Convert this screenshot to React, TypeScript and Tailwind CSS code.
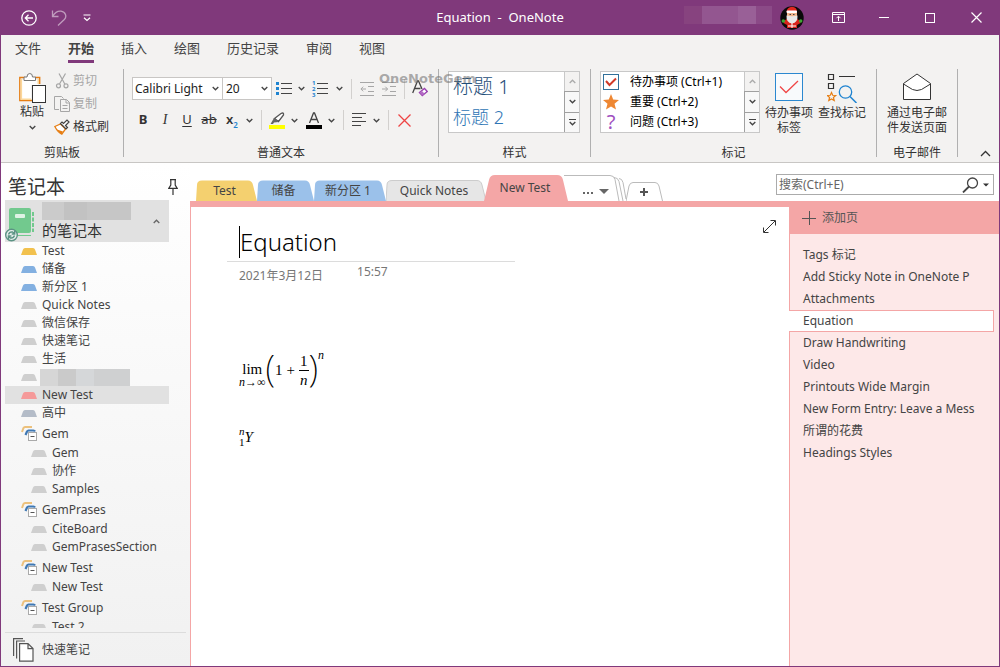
import type { ReactNode } from "react";

const SANS = "font-['Noto_Sans','Noto_Sans_CJK_SC',sans-serif]";

const menuTabs = ["文件", "开始", "插入", "绘图", "历史记录", "审阅", "视图"];

const sections = [
  { name: "Test", color: "#f2c14e" },
  { name: "储备", color: "#83b0e1" },
  { name: "新分区 1", color: "#83b0e1" },
  { name: "Quick Notes", color: "#cfcfcf" },
  { name: "微信保存", color: "#cfcfcf" },
  { name: "快速笔记", color: "#cfcfcf" },
  { name: "生活", color: "#cfcfcf" },
  { name: "", color: "#cfcfcf" },
  { name: "New Test", color: "#f59a9a", active: true },
  { name: "高中", color: "#b4bcc8" },
];

const groups = [
  { name: "Gem", children: ["Gem", "协作", "Samples"] },
  { name: "GemPrases", children: ["CiteBoard", "GemPrasesSection"] },
  { name: "New Test", children: ["New Test"] },
  { name: "Test Group", children: ["Test 2"] },
];

const sectionTabs = [
  { name: "Test", width: 61, fill: "#f4d06f" },
  { name: "储备", width: 57, fill: "#9bc1ea" },
  { name: "新分区 1", width: 72, fill: "#9bc1ea" },
  { name: "Quick Notes", width: 100, fill: "#e6e6e6", stroke: "#cccccc" },
];

const pages = [
  "Tags 标记",
  "Add Sticky Note in OneNote P",
  "Attachments",
  "Equation",
  "Draw Handwriting",
  "Video",
  "Printouts Wide Margin",
  "New Form Entry: Leave a Mess",
  "所谓的花费",
  "Headings Styles",
];

function Chevron({ up = false, color = "#444" }: { up?: boolean; color?: string }) {
  return (
    <svg width="7" height="5" viewBox="0 0 7 5" fill="none" stroke={color} strokeWidth="1.3">
      <path d={up ? "M.7 4 3.5 1.2 6.3 4" : "M.7 1 3.5 3.8 6.3 1"} />
    </svg>
  );
}

function DropButton({ label }: { label: string }) {
  return (
    <button aria-label={label} className="flex h-5 w-2.5 items-center justify-center">
      <Chevron />
    </button>
  );
}

function Tool({ label, className = "w-4", children }: { label: string; className?: string; children: ReactNode }) {
  return (
    <button aria-label={label} className={`flex h-5 items-center justify-center ${className}`}>
      {children}
    </button>
  );
}

function Sep() {
  return <span className="mx-[7px] h-5 w-px bg-[#d2d0ce]" />;
}

function RibbonGroup({ title, className, children }: { title: string; className: string; children: ReactNode }) {
  return (
    <section className={`flex h-[88px] shrink-0 flex-col border-r border-[#b0b0b0] ${className}`}>
      <div className="min-h-0 flex-1">{children}</div>
      <h2 className="h-2 text-center text-xs leading-2 text-[#333]">{title}</h2>
    </section>
  );
}

function GalleryScroll() {
  return (
    <div className="flex w-[15px] flex-col">
      <button aria-label="向上" className="flex flex-1 items-center justify-center border-l border-[#c8c8c8] bg-[#f3f2f1]">
        <Chevron up color="#aaa" />
      </button>
      <button aria-label="向下" className="flex flex-1 items-center justify-center border border-r-0 border-[#a0a0a0] bg-[#f8f8f8]">
        <Chevron />
      </button>
      <button aria-label="更多" className="flex flex-1 flex-col items-center justify-center gap-px border-l border-[#a0a0a0] bg-[#f8f8f8]">
        <span className="h-px w-[7px] bg-[#444]" />
        <Chevron />
      </button>
    </div>
  );
}

function Santa() {
  return (
    <svg width="24" height="24" viewBox="0 0 24 24">
      <circle cx="12" cy="12" r="11.7" fill="#0a0a0a" />
      <path d="M4 15 8 12h8l4 3 .5 2-3.500 2v3H7v-3l-3.500-2z" fill="#d8241c" />
      <path d="M6.500 6Q7 1 12 .7q5 .3 5 5.300z" fill="#e0281f" />
      <rect x="7" y="6" width="10" height="5" fill="#f0b48c" />
      <rect x="6.500" y="4.500" width="10.500" height="2.500" rx="1" fill="#fff" />
      <path d="M6.500 9.500q5.500 1.500 11 0 .5 7-5.500 8-6-1-5.500-8z" fill="#e8e8e8" />
      <path d="M9.500 8.500h1.500M13 8.500h1.500" stroke="#444" />
      <path d="M11.500 17h1v5h-1zM8 19.500h8v1H8z" fill="#fff" />
      <circle cx="3.300" cy="15" r="1.800" fill="#3fa535" />
      <circle cx="20.700" cy="15" r="1.800" fill="#3fa535" />
    </svg>
  );
}

function TitleBar() {
  return (
    <header className="grid h-[35px] shrink-0 grid-cols-[1fr_auto_1fr] items-center bg-[#80397b] text-white">
      <div className="flex items-center pl-5">
        <button aria-label="返回">
          <svg width="16" height="16" viewBox="0 0 16 16" fill="none" stroke="currentColor" strokeWidth="1.3">
            <circle cx="8" cy="8" r="7.2" />
            <path d="M12 8H4.5M7.5 4.8 4.3 8l3.2 3.2" />
          </svg>
        </button>
        <button aria-label="撤消" className="ml-[14px] text-[#bf9cbd]">
          <svg width="16" height="18" viewBox="0 0 16 18" fill="none" stroke="currentColor" strokeWidth="1.3">
            <path d="M1.500 1.500v6h6M1.700 7.200C4 3.500 7 1.800 10 2.200c4.600.6 6.200 5.300 3.300 8.300L7 16.500" />
          </svg>
        </button>
        <button aria-label="自定义快速访问工具栏" className="ml-4">
          <svg width="8" height="8" viewBox="0 0 8 8" fill="none" stroke="currentColor" strokeWidth="1.2">
            <path d="M.5 1h7M1 3.800l3 2.700 3-2.700" />
          </svg>
        </button>
      </div>
      <h1 className="text-[13px] whitespace-pre">Equation  -  OneNote</h1>
      <div className="flex items-center justify-end">
        <div className="mr-2 mb-1.5 flex h-[18px]">
          <span className="w-[18px] bg-[#87437f]" />
          <span className="w-9 bg-[#935690]" />
          <span className="w-[18px] bg-[#996097]" />
          <span className="w-4 bg-[#8b4a87]" />
        </div>
        <Santa />
        <button aria-label="功能区显示选项" className="ml-[11px] flex w-[46px] justify-center">
          <svg width="13" height="11" viewBox="0 0 13 11" fill="none" stroke="currentColor">
            <path d="M.5.500h12v10H.5zM.5 2.500h12M6.500 9V4.500M4.500 6.200l2-2 2 2" />
          </svg>
        </button>
        <button aria-label="最小化" className="flex w-[46px] justify-center">
          <span className="h-px w-[10px] bg-white" />
        </button>
        <button aria-label="最大化" className="flex w-[46px] justify-center">
          <span className="size-[10px] border border-white" />
        </button>
        <button aria-label="关闭" className="flex w-[46px] justify-center">
          <svg width="11" height="11" viewBox="0 0 11 11" stroke="currentColor" strokeWidth="1.2">
            <path d="m.5.500 10 10M10.500.5l-10 10" />
          </svg>
        </button>
      </div>
    </header>
  );
}

function ClipboardGroup() {
  return (
    <RibbonGroup title="剪贴板" className="w-[123px]">
      <div className="flex pl-[17px]">
        <button className="flex w-7 flex-col items-center pt-[3px] text-xs leading-[14px] text-[#333]">
          <svg width="28" height="31" viewBox="0 0 28 31" fill="none" className="shrink-0">
            <path d="M7 5.500H1.800v23H14M17 5.500h4.700V12" stroke="#e67e14" strokeWidth="1.400" />
            <path d="M4 8h16v5h-7v14H4z" fill="#fff" />
            <path d="M3.300 7v20.300H13M20.300 7v5" stroke="#fbd79a" strokeWidth="1.600" />
            <path d="M6 8.500V5h3q0-3.500 2.800-3.500T14.500 5h3v3.500z" fill="#fff" stroke="#777" />
            <rect x="14.500" y="13.500" width="13" height="17" fill="#fff" stroke="#333" />
          </svg>
          <span className="pt-0.5">粘贴</span>
          <span className="pt-1.5"><Chevron /></span>
        </button>
        <div className="flex flex-col pl-2 text-xs">
          <button className="flex h-[23px] items-center gap-[3px] text-[#a6a6a6]">
            <svg width="16" height="16" viewBox="0 0 16 16" fill="none" stroke="currentColor" strokeWidth="1.200">
              <path d="M5 .5 10.800 11M11.500.5 5.500 11" />
              <circle cx="4.500" cy="12.800" r="2" />
              <circle cx="12" cy="12.800" r="2" />
            </svg>
            剪切
          </button>
          <button className="flex h-[23px] items-center gap-[3px] text-[#a6a6a6]">
            <svg width="16" height="16" viewBox="0 0 16 16" fill="none" stroke="currentColor">
              <path d="M5 13.500H.5V.5h7l2 2M6.500 3.500h6l3 3v9h-9zM12 3.500v3.500h3.500M8.500 9.500h5M8.500 12.500h5" />
            </svg>
            复制
          </button>
          <button className="flex h-[23px] items-center gap-[3px] text-[#333]">
            <svg width="16" height="16" viewBox="0 0 16 16" fill="none">
              <path d="M.8 7.500 6.500 5l5 5-3.700 5.200Q4 13.500.8 7.500z" fill="#fff" stroke="#e67e14" strokeWidth="1.300" />
              <path d="m3 10.500 6 2-1.500 2.500Q4.500 13.500 3 10.500z" fill="#e67e14" />
              <path d="m6.500 4.500 5.500 5.500 1.500-1.500-2-2L15 3l-2-2-3.500 3.500L8 3z" fill="#fff" stroke="#444" strokeWidth="1.200" />
            </svg>
            格式刷
          </button>
        </div>
      </div>
    </RibbonGroup>
  );
}

function TextGroup() {
  return (
    <RibbonGroup title="普通文本" className="w-[315px]">
      <div className="flex items-center pt-2 pl-2">
        <label className="relative flex h-[23px] w-[91px] items-center border border-[#c8c6c4] bg-white">
          <select aria-label="字体" className="w-full appearance-none pl-0.5 text-xs text-[#222]">
            <option>Calibri Light</option>
          </select>
          <span className="pointer-events-none absolute right-[3px]"><Chevron /></span>
        </label>
        <label className="relative flex h-[23px] w-[49px] items-center border border-l-0 border-[#c8c6c4] bg-white">
          <select aria-label="字号" className="w-full appearance-none pl-[3px] text-xs text-[#222]">
            <option>20</option>
          </select>
          <span className="pointer-events-none absolute right-[3px]"><Chevron /></span>
        </label>
        <Tool label="项目符号" className="w-6">
          <svg width="16" height="16" viewBox="0 0 16 16">
            <path d="M0 1h3v3H0zM0 6h3v3H0zM0 11h3v3H0z" fill="#1e83d0" />
            <path d="M5 2.500h11M5 7.500h11M5 12.500h11" stroke="#444" />
          </svg>
        </Tool>
        <DropButton label="项目符号选项" />
        <Tool label="编号" className="w-7">
          <svg width="16" height="20" viewBox="0 0 16 20">
            <g fill="#1e83d0" className="text-[6px] font-bold">
              <text x="0" y="6">1</text>
              <text x="0" y="12">2</text>
              <text x="0" y="18">3</text>
            </g>
            <path d="M5 4.500h11M5 9.500h11M5 14.500h11" stroke="#444" />
          </svg>
        </Tool>
        <DropButton label="编号选项" />
        <Sep />
        <Tool label="减少缩进">
          <svg width="15" height="14" viewBox="0 0 15 14" fill="none" stroke="#a6a6a6">
            <path d="M0 .500h14M8 4.500h6M8 9.500h6M0 13.500h14M6 7H1M3.200 4.700.9 7l2.300 2.300" />
          </svg>
        </Tool>
        <Tool label="增加缩进" className="ml-1.5 w-4">
          <svg width="15" height="14" viewBox="0 0 15 14" fill="none" stroke="#a6a6a6">
            <path d="M0 .500h14M8 4.500h6M8 9.500h6M0 13.500h14M0 7h5.500M3.300 4.700 5.600 7 3.300 9.300" />
          </svg>
        </Tool>
        <Sep />
        <Tool label="清除格式">
          <svg width="16" height="17" viewBox="0 0 16 17" fill="none">
            <path d="M.7 13 5.500 1h1L10 9M2.500 8.500h6" stroke="#444" strokeWidth="1.300" />
            <path d="m7.500 12.500 5-4 2.800 3-5 4z" fill="#fff" stroke="#9a3fb0" strokeWidth="1.400" />
            <path d="m7.500 12.500 2.300-1.800 2.800 3-2.300 1.800z" fill="#b36cc5" />
          </svg>
        </Tool>
      </div>
      <div className="flex items-center pt-2.5 pl-2 text-[13px] text-[#333]">
        <Tool label="加粗" className="w-[22px] font-bold">B</Tool>
        <Tool label="倾斜" className="w-[22px] font-['Liberation_Serif',serif] text-sm italic">I</Tool>
        <Tool label="下划线" className="w-[22px] underline underline-offset-2">U</Tool>
        <Tool label="删除线" className="w-[22px] line-through">ab</Tool>
        <Tool label="下标" className="w-6 font-semibold">
          x<span className="self-end text-[8px] leading-[10px] text-[#1e83d0]">2</span>
        </Tool>
        <DropButton label="下标选项" />
        <Sep />
        <Tool label="突出显示">
          <svg width="16" height="17" viewBox="0 0 16 17">
            <path d="M0 13h16v4H0z" fill="#ffff00" />
            <path d="m5.500 6.500 6.500-5q3-1.500 2.500 1.500L9.500 9.500z" fill="#fff" stroke="#555" strokeWidth="1.300" />
            <path d="m1.500 12 3.500-6 4.500 4-4.500.5-1 1.500z" fill="#666" />
          </svg>
        </Tool>
        <span className="pl-1"><DropButton label="突出显示颜色" /></span>
        <Tool label="字体颜色" className="ml-[7px] w-4">
          <svg width="16" height="17" viewBox="0 0 16 17" fill="none">
            <path d="M3.500 11 7.500 1h1l4 10M5 7.500h6" stroke="#444" strokeWidth="1.300" />
            <path d="M0 13h16v4H0z" fill="#000" />
          </svg>
        </Tool>
        <span className="pl-1"><DropButton label="字体颜色选项" /></span>
        <Sep />
        <Tool label="段落对齐">
          <svg width="14" height="14" viewBox="0 0 14 14" stroke="#444">
            <path d="M0 .500h14M0 4.500h10M0 8.500h14M0 12.500h9" />
          </svg>
        </Tool>
        <span className="pl-1"><DropButton label="对齐选项" /></span>
        <Sep />
        <Tool label="删除">
          <svg width="13" height="13" viewBox="0 0 13 13" stroke="#ee4444" strokeWidth="1.300">
            <path d="m.5.500 12 12M12.500.5l-12 12" />
          </svg>
        </Tool>
      </div>
    </RibbonGroup>
  );
}

function TagsGroup() {
  return (
    <RibbonGroup title="标记" className="w-[286px]">
      <div className="flex pt-0.5 pl-[9px]">
        <div className="flex h-[62px] w-[160px] border border-[#c8c8c8] bg-white">
          <div className="flex flex-1 flex-col text-xs text-black">
            <button className="flex h-5 items-center gap-[11px] pl-0.5">
              <svg width="16" height="16" viewBox="0 0 16 16" fill="none">
                <rect x=".5" y=".5" width="15" height="15" fill="#fff" stroke="#31709a" />
                <path d="m3 7 3.500 4L13 4.500" stroke="#d03a28" strokeWidth="2" />
              </svg>
              待办事项 (Ctrl+1)
            </button>
            <button className="flex h-5 items-center gap-[11px] pl-0.5">
              <svg width="16" height="16" viewBox="0 0 16 16" fill="#ee8733">
                <path d="m8 0 2.200 5.500 5.800.4-4.500 3.800 1.500 5.800L8 12.400l-5 3.100 1.500-5.800L0 5.900l5.800-.4z" />
              </svg>
              重要 (Ctrl+2)
            </button>
            <button className="flex h-5 items-center gap-[11px] pl-0.5">
              <span className="w-4 text-center text-xl leading-5 text-[#a04fc0]">?</span>
              问题 (Ctrl+3)
            </button>
          </div>
          <GalleryScroll />
        </div>
        <button className="ml-1 flex w-[50px] flex-col items-center text-xs leading-[15px] text-[#333]">
          <svg width="28" height="28" viewBox="0 0 28 28" fill="none" className="mt-0.5 mb-1 shrink-0">
            <rect x=".5" y=".5" width="27" height="27" fill="#f8fafc" stroke="#2b88d0" />
            <path d="m5 13.500 6 6L23 8" stroke="#f04848" strokeWidth="1.300" />
          </svg>
          待办事项标签
        </button>
        <button className="ml-[3px] flex w-[50px] flex-col items-center self-start text-xs leading-[15px] text-[#333]">
          <svg width="30" height="30" viewBox="0 0 30 30" fill="none" className="mt-0.5 mb-0.5">
            <path d="M1.500 1.500h5v5h-5zM1.500 10.500h5v5h-5zM12 3.500h16" stroke="#333" strokeWidth="1.200" />
            <path d="m4.500 19.500 1.200 2.800 3 .2-2.300 2 .8 3-2.700-1.600-2.700 1.600.8-3-2.300-2 3-.2z" stroke="#e67e14" strokeWidth="1.200" />
            <circle cx="18.500" cy="19" r="6.200" stroke="#1e83d0" strokeWidth="1.300" />
            <path d="m23 23.500 6.500 6.500" stroke="#1e83d0" strokeWidth="1.500" />
          </svg>
          查找标记
        </button>
      </div>
    </RibbonGroup>
  );
}

function Ribbon() {
  return (
    <div className="shrink-0 border-b border-[#c8c6c4] bg-[#f3f2f1]">
      <nav className="flex h-[34px] items-start gap-[27px] pl-3.5 text-[13px] text-[#444]">
        {menuTabs.map((tab) => (
          <button
            key={tab}
            className={`h-7 border-b-[3px] pt-0.5 ${tab === "开始" ? "border-[#80397b] font-bold" : "border-transparent"}`}
          >
            {tab}
          </button>
        ))}
      </nav>
      <div className="relative flex pb-[5px]">
        <ClipboardGroup />
        <TextGroup />
        <RibbonGroup title="样式" className="w-[152px]">
          <div className="pt-0.5 pl-[9px]">
            <div className="flex h-[62px] w-[132px] border border-[#c8c8c8] bg-white">
              <div className="flex flex-1 flex-col items-start pl-1">
                <button className="h-[30px] text-xl leading-[30px] font-light text-[#1f4e79]">标题 1</button>
                <button className="h-[30px] text-lg leading-[30px] font-light text-[#2e75b5]">标题 2</button>
              </div>
              <GalleryScroll />
            </div>
          </div>
        </RibbonGroup>
        <TagsGroup />
        <RibbonGroup title="电子邮件" className="w-[81px]">
          <button className="flex w-full flex-col items-center px-[9px] pt-1 text-xs leading-[15px] text-[#333]">
            <svg width="28" height="28" viewBox="0 0 28 28" fill="#fff" stroke="#333" className="mb-1">
              <path d="M.5 10.500 14 1l13.500 9.500v16H.5z" />
              <path d="m.5 11 9 5.500q4.500 2 9 0l9-5.500" fill="none" />
            </svg>
            通过电子邮件发送页面
          </button>
        </RibbonGroup>
        <button aria-label="折叠功能区" className="mr-2 ml-auto self-end">
          <svg width="11" height="7" viewBox="0 0 11 7" fill="none" stroke="#333" strokeWidth="1.300">
            <path d="M1 6 5.500 1.500 10 6" />
          </svg>
        </button>
        <span className="pointer-events-none absolute top-0 left-[378px] font-['DejaVu_Sans',sans-serif] text-[13px] leading-5 font-bold text-[#777]/60">
          OneNoteGem
        </span>
      </div>
    </div>
  );
}

function SectionIcon({ color }: { color: string }) {
  return (
    <svg width="16" height="7" viewBox="0 0 16 7" fill={color}>
      <path d="M0 7 2 1.500Q2.500 0 4 0h8q1.500 0 2 1.500L16 7z" />
    </svg>
  );
}

function Sidebar() {
  return (
    <aside className="flex w-[189px] shrink-0 flex-col bg-linear-to-b from-white to-[#f1f1f1] pl-1 text-xs text-[#444]">
      <div className="flex h-[37px] shrink-0 items-center justify-between pt-2.5 pr-3 pl-[3px]">
        <h2 className="text-[19px] leading-6 text-[#333]">笔记本</h2>
        <button aria-label="固定笔记本窗格">
          <svg width="10" height="16" viewBox="0 0 10 16" fill="none" stroke="#333" strokeWidth="1.200">
            <path d="M2 .600h6M2.800.6v5.500L.8 9.400h8.400L7.200 6.100V.6M5 9.500V16" />
          </svg>
        </button>
      </div>
      <button className="flex h-[42px] w-[164px] shrink-0 items-center bg-[#e1e1e1] text-left">
        <svg width="32" height="38" viewBox="0 0 32 38" fill="none" className="self-end">
          <path d="M4 6q0-2 2-2h18q2 0 2 2v21q0 2-2 2H6q-2 0-2-2z" fill="#72c98e" />
          <rect x="10" y="10" width="10" height="4" rx="1" fill="#dff3e5" />
          <path d="M28 8v20" stroke="#72c98e" strokeWidth="2" strokeDasharray="4 1.500" />
          <path d="M8 31.500h18" stroke="#72c98e" />
          <circle cx="6.500" cy="31" r="5.800" fill="#e9f0ee" stroke="#5c9384" strokeWidth="1.400" />
          <path d="M3.500 30.500q1-3 4-2.500l2 1.500M9.700 27v3h-3M9.500 31.500q-1 3-4 2.500l-2-1.500M3.400 35v-3h3" stroke="#5c9384" strokeWidth="1.400" />
        </svg>
        <span className="ml-[5px] flex-1">
          <span className="flex h-[18px] w-[89px] bg-[#c6c6c6]">
            <span className="w-1/4 bg-[#cbcbcb]" />
            <span className="w-1/4 bg-[#c2c2c2]" />
          </span>
          <span className="block text-[15px] leading-[20px] text-[#333]">的笔记本</span>
        </span>
        <span className="pr-[9px]"><Chevron up color="#666" /></span>
      </button>
      <div className="mb-1 min-h-0 flex-1 overflow-hidden">
        {sections.map((section, i) => (
          <button
            key={i}
            className={`flex h-[18px] w-[164px] items-center gap-[5px] pl-4 ${section.active ? "bg-[#e1e1e1]" : ""}`}
          >
            <SectionIcon color={section.color} />
            {section.name || (
              <span className="-ml-0.5 flex h-[17px] w-[90px] bg-[#cfd0d1]">
                <span className="w-[18px] bg-[#d6d6d6]" />
                <span className="w-[18px] bg-[#cacaca]" />
                <span className="w-[18px] bg-[#d5d7d9]" />
              </span>
            )}
          </button>
        ))}
        {groups.map((group) => (
          <div key={group.name}>
            <button className="flex h-[22px] items-center gap-[5px] pt-px pl-4">
              <svg width="16" height="15" viewBox="0 0 16 15" fill="none">
                <path d="M1 6 2.500 2Q3 1 4 1h7" stroke="#ecc17d" strokeWidth="2" />
                <path d="M4.500 9 6 5.500Q6.500 4.500 7.500 4.500h5q1 0 1.500 1" stroke="#3f78b4" strokeWidth="2.200" />
                <rect x="7.500" y="6.500" width="8" height="8" fill="#fff" stroke="#aaa" />
                <path d="M9.500 10.500h4" stroke="#555" />
              </svg>
              {group.name}
            </button>
            {group.children.map((child) => (
              <button key={child} className="flex h-[18px] items-center gap-[5px] pl-[26px]">
                <SectionIcon color="#cfcfcf" />
                {child}
              </button>
            ))}
          </div>
        ))}
      </div>
      <button className="mr-1 flex h-[34px] shrink-0 items-center gap-2 border-t border-[#dcdcdc] pl-2">
        <svg width="21" height="24" viewBox="0 0 21 24" fill="#fff" stroke="#555" strokeWidth="1.200">
          <path d="M.6 18V.6H10M3.600 20.500V3H12" fill="none" />
          <path d="M6.600 5.600h8.400l5 5v12.500H6.600zM15 5.600v5h5" />
        </svg>
        快速笔记
      </button>
    </aside>
  );
}

function SectionTabs() {
  return (
    <nav className="flex items-end pl-1.5 text-xs text-[#444]">
      {sectionTabs.map(({ name, width, fill, stroke }) => (
        <button key={name} className="relative h-[21px] pr-1" style={{ width }}>
          <svg className="absolute inset-0" width={width} height="21" fill={fill} stroke={stroke ?? "none"}>
            <path d={`M0 21 1 5Q1 .5 6 .5H${width - 9}Q${width - 5} .5 ${width - 4} 5L${width} 21`} />
          </svg>
          <span className="relative">{name}</span>
        </button>
      ))}
      <button className="relative -ml-0.5 h-[26px] w-[84px] pr-0.5">
        <svg className="absolute inset-0" width="84" height="26" fill="#f4a6a6">
          <path d="M0 26 5 5Q6 0 11 0H73Q78 0 79 5L84 26z" />
        </svg>
        <span className="relative">New Test</span>
      </button>
      <button aria-label="其他分区" className="-ml-1 h-[26px] w-[62px]">
        <svg width="62" height="26" viewBox="0 0 62 26" fill="none" stroke="#bbb">
          <path d="M0 .500h46q4 0 5 4L55 26M50 2.500q4 0 5 4L59 26M55 3.500q3 0 4 4L62 24" />
          <path d="M19 17h2v2h-2zM23 17h2v2h-2zM27 17h2v2h-2z" fill="#666" stroke="none" />
          <path d="M35 14h10l-5 5z" fill="#666" stroke="none" />
        </svg>
      </button>
      <button aria-label="创建新分区" className="h-[19px] w-[37px]">
        <svg width="37" height="19" viewBox="0 0 37 19" fill="none">
          <path d="M0 19 3 4Q4 .500 7 .500h22q3 0 4 3.500L36.500 19" stroke="#bbb" />
          <path d="M18 6v8M14 10h8" stroke="#555" strokeWidth="2" />
        </svg>
      </button>
    </nav>
  );
}

function Formula() {
  return (
    <div className="flex items-center font-['Liberation_Serif',serif] text-[15px] leading-4 text-black">
      <div className="flex flex-col items-center pt-2">
        <span>lim</span>
        <span className="text-xs leading-[10px]"><i>n</i>→∞</span>
      </div>
      <span className={`pb-1 text-4xl leading-9 font-extralight ${SANS}`}>(</span>
      <span className="pr-1">1</span>
      <span className="pr-1">+</span>
      <span className="flex flex-col items-center">
        <span className="border-b border-black px-px leading-[18px]">1</span>
        <i className="leading-[18px]">n</i>
      </span>
      <span className={`pb-1 text-4xl leading-9 font-extralight ${SANS}`}>)</span>
      <i className="self-start text-xs leading-[10px]">n</i>
    </div>
  );
}

function Canvas() {
  return (
    <main className="relative min-w-0 flex-1 border-t-[6px] border-l border-[#f4a6a6] bg-white px-9 pt-[19px]">
      <button aria-label="全页视图" className="absolute top-[13px] right-[13px]">
        <svg width="13" height="13" viewBox="0 0 13 13" fill="none" stroke="#333">
          <path d="M1 12 12 1M7.500.5h5v5M.5 7.500v5h5" />
        </svg>
      </button>
      <div className="w-72 border-b border-[#dcdcdc] px-3 pb-[3px]">
        <h1 className="h-8 border-l border-black text-2xl leading-8 font-light text-black">Equation</h1>
      </div>
      <div className="flex gap-[34px] px-3 text-xs text-[#767676]">
        <span className="pt-1 leading-5">2021年3月12日</span>
        <span className="leading-5">15:57</span>
      </div>
      <div className="px-3 pt-16">
        <Formula />
        <div className="flex items-center pt-9 font-['Liberation_Serif',serif] text-[15px] text-black">
          <span className="flex flex-col text-[11px] leading-[11px]">
            <i>n</i>
            <span>1</span>
          </span>
          <i>Y</i>
        </div>
      </div>
    </main>
  );
}

function PageList() {
  return (
    <aside className="w-[210px] shrink-0 border-l border-[#f4a6a6] bg-[#fde8e8] text-xs text-[#444]">
      <button className="flex h-[33px] w-full items-center gap-1.5 bg-[#f4a6a6] pl-3 text-[#555]">
        <svg width="14" height="14" viewBox="0 0 14 14" stroke="#555">
          <path d="M7.500 0v14M0 7.500h14" />
        </svg>
        添加页
      </button>
      <ul className="pt-2.5">
        {pages.map((page) => (
          <li key={page}>
            <a
              href="#"
              className={
                page === "Equation"
                  ? "relative -ml-px mr-[5px] block h-[22px] border border-l-0 border-[#f4a6a6] bg-white pl-3.5 leading-5"
                  : "block h-[22px] pl-[13px] leading-[22px] whitespace-nowrap"
              }
            >
              {page}
            </a>
          </li>
        ))}
      </ul>
    </aside>
  );
}

export default function App() {
  return (
    <div className={`flex h-screen flex-col overflow-hidden border border-t-0 border-[#80397b] bg-white ${SANS}`}>
      <TitleBar />
      <Ribbon />
      <div className="flex min-h-0 flex-1">
        <Sidebar />
        <div className="flex min-w-0 flex-1 flex-col">
          <div className="flex h-[38px] shrink-0 items-end justify-between">
            <SectionTabs />
            <form className="mr-[5px] mb-1.5 flex h-[21px] w-[218px] items-center border border-[#ababab]">
              <input
                aria-label="搜索"
                placeholder="搜索(Ctrl+E)"
                className="min-w-0 flex-1 pl-0.5 text-xs outline-none placeholder:text-[#666]"
              />
              <button type="button" aria-label="搜索选项" className="flex items-center gap-1 pr-1">
                <svg width="17" height="16" viewBox="0 0 17 16" fill="none" stroke="#444">
                  <circle cx="10.500" cy="6" r="5" strokeWidth="1.300" />
                  <path d="m7 9.500-6 6" strokeWidth="1.800" />
                </svg>
                <svg width="6" height="4" viewBox="0 0 6 4" fill="#333">
                  <path d="M0 .500h6L3 3.500z" />
                </svg>
              </button>
            </form>
          </div>
          <div className="flex min-h-0 flex-1">
            <Canvas />
            <PageList />
          </div>
        </div>
      </div>
    </div>
  );
}
